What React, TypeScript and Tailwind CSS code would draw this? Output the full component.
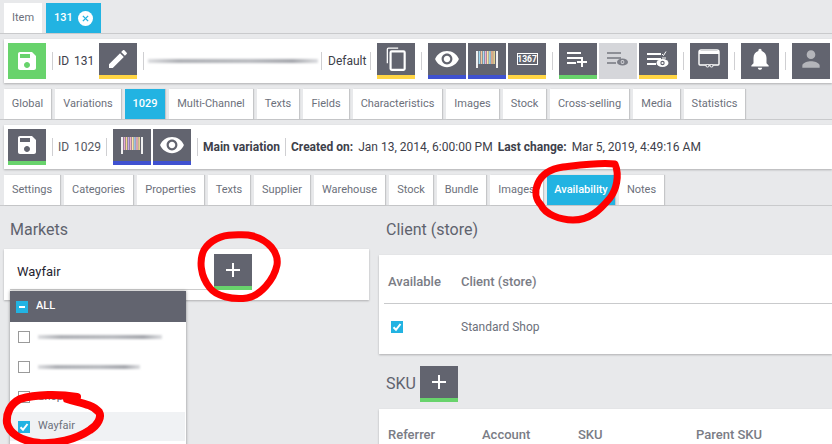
import React from 'react';

const MAIN_TABS = [
  { label: 'Global', w: 'w-[47px]' },
  { label: 'Variations', w: 'w-[66px]' },
  { label: '1029', w: 'w-[40px]', active: true },
  { label: 'Multi-Channel', w: 'w-[84px]' },
  { label: 'Texts', w: 'w-[42px]' },
  { label: 'Fields', w: 'w-[46px]' },
  { label: 'Characteristics', w: 'w-[89px]' },
  { label: 'Images', w: 'w-[53px]' },
  { label: 'Stock', w: 'w-[43px]' },
  { label: 'Cross-selling', w: 'w-[79px]' },
  { label: 'Media', w: 'w-[47px]' },
  { label: 'Statistics', w: 'w-[61px]' },
];

const SUB_TABS = [
  { label: 'Settings', w: 'w-[56px]' },
  { label: 'Categories', w: 'w-[69px]' },
  { label: 'Properties', w: 'w-[67px]' },
  { label: 'Texts', w: 'w-[42px]' },
  { label: 'Supplier', w: 'w-[56px]' },
  { label: 'Warehouse', w: 'w-[71px]' },
  { label: 'Stock', w: 'w-[44px]' },
  { label: 'Bundle', w: 'w-[49px]' },
  { label: 'Images', w: 'w-[53px]' },
  { label: 'Availability', w: 'w-[68px]', active: true },
  { label: 'Notes', w: 'w-[45px]' },
];

const Tab = ({ label, w, active }: { label: string; w: string; active?: boolean }) => (
  <div
    className={`${w} h-[30px] pt-px flex items-center justify-center text-[11px] shadow-[1px_0_1px_rgba(0,0,0,0.15)] ${
      active ? 'bg-[#22b3e2] text-white font-medium' : 'bg-white text-[#6c707b]'
    }`}
  >
    {label}
  </div>
);

const Sep = () => <div className="w-px h-[18px] mx-[6px] bg-[#cfcfd2] shrink-0" />;

const Btn = ({
  bar,
  light,
  children,
}: {
  bar?: string;
  light?: boolean;
  children: React.ReactNode;
}) => (
  <div
    className={`w-[38px] h-9 shrink-0 flex items-center justify-center border-b-4 ${
      light ? 'bg-[#d5d6da]' : 'bg-[#62646f]'
    } ${bar ?? (light ? 'border-[#d5d6da]' : 'border-[#62646f]')}`}
  >
    {children}
  </div>
);

const SaveIcon = () => (
  <svg width="24" height="24" viewBox="0 0 24 24" fill="white">
    <path d="M17 3H5c-1.11 0-2 .9-2 2v14c0 1.1.89 2 2 2h14c1.1 0 2-.9 2-2V7l-4-4zm-5 16c-1.66 0-3-1.34-3-3s1.34-3 3-3 3 1.34 3 3-1.34 3-3 3zm3-10H5V5h10v4z" />
  </svg>
);

const EyeIcon = ({ fill = 'white', size = 26 }: { fill?: string; size?: number }) => (
  <svg width={size} height={size} viewBox="0 0 24 24" fill={fill}>
    <path d="M12 4.5C7 4.5 2.73 7.61 1 12c1.73 4.39 6 7.5 11 7.5s9.27-3.11 11-7.5c-1.73-4.39-6-7.5-11-7.5zM12 17c-2.76 0-5-2.24-5-5s2.24-5 5-5 5 2.24 5 5-2.24 5-5 5zm0-8c-1.66 0-3 1.34-3 3s1.34 3 3 3 3-1.34 3-3-1.34-3-3-3z" />
  </svg>
);

const BarcodeIcon = ({ colors }: { colors: string[] }) => (
  <svg width="22" height="17" viewBox="0 0 22 17">
    <rect x="0" y="0" width="2" height="17" fill="#f0f0f0" />
    {colors.map((c, i) => (
      <rect key={i} x={2.6 + i * 2.1} y="0" width="1.6" height="13" fill={c} />
    ))}
    <rect x="20" y="0" width="2" height="17" fill="#f0f0f0" />
  </svg>
);

const ListLines = ({ fill }: { fill: string }) => (
  <>
    <rect x="0" y="1" width="14" height="2" fill={fill} />
    <rect x="0" y="6" width="14" height="2" fill={fill} />
    <rect x="0" y="11" width="9" height="2" fill={fill} />
  </>
);

const Card = ({ className, children }: { className?: string; children: React.ReactNode }) => (
  <div className={`bg-white shadow-[0_1px_2px_rgba(0,0,0,0.25)] ${className ?? ''}`}>{children}</div>
);

const Blurred = ({ className }: { className: string }) => (
  <div
    className={`${className} h-[4px] blur-[1px] bg-[linear-gradient(90deg,#dcdde0,#aeb0b5_18%,#b8babf_60%,#a4a6ac_85%,#dcdde0)]`}
  />
);

const Check = ({ on }: { on?: boolean }) =>
  on ? (
    <div className="w-3 h-3 bg-[#22b3e2] flex items-center justify-center shrink-0">
      <svg width="10" height="10" viewBox="0 0 10 10" fill="none" stroke="white" strokeWidth="2">
        <path d="M1.5 5.2 4 7.8 8.5 2" />
      </svg>
    </div>
  ) : (
    <div className="w-3 h-3 border border-[#9a9a9a] bg-white shrink-0" />
  );

const PlusIcon = () => (
  <svg width="16" height="16" viewBox="0 0 16 16" stroke="white" strokeWidth="2">
    <path d="M8 1v14M1 8h14" />
  </svg>
);

const BAR_A = ['#9fd8f0', '#f4c9a0', '#a8dcf2', '#f0b0d0', '#f6e6a8', '#9fd8f0', '#f4b890', '#f0dc98'];
const BAR_B = ['#e8a8d8', '#f4d890', '#c8a8e8', '#f0b0c8', '#f6e6a8', '#a8c8f0', '#f4b0c0', '#f0dc98'];

export default function App() {
  return (
    <div
      className="relative w-[832px] h-[444px] overflow-hidden bg-[#e8e9eb] text-[11px]"
      style={{ fontFamily: 'Roboto, sans-serif' }}
    >
      {/* top tabs */}
      <div className="flex gap-1 pl-1 pt-[3px] border-b border-[#c9cacc]">
        <div className="w-[38px] h-[30px] pt-px bg-white text-[#6c707b] flex items-center justify-center">Item</div>
        <div className="w-[55px] h-[30px] bg-[#22b3e2] text-white font-medium flex items-center gap-[5px] pl-2">
          131
          <span className="w-[15px] h-[15px] rounded-full bg-white flex items-center justify-center">
            <svg width="7" height="7" viewBox="0 0 8 8" stroke="#22b3e2" strokeWidth="1.6">
              <path d="M1 1l6 6M7 1 1 7" />
            </svg>
          </span>
        </div>
      </div>

      {/* item toolbar */}
      <Card className="ml-1 mt-[5px] h-11 pl-1 flex items-center text-[12px] text-[#3d404a]">
        <div className="w-[38px] h-9 shrink-0 flex items-center justify-center bg-[#68d36c]">
          <SaveIcon />
        </div>
        <Sep />
        <span className="w-[34px] -ml-px mr-[7px] [word-spacing:2px] whitespace-nowrap">ID 131</span>
        <Btn bar="border-[#ffd544]">
          <svg width="24" height="24" viewBox="0 0 24 24" fill="white">
            <path d="M3 17.25V21h3.75L17.81 9.94l-3.75-3.75L3 17.25zM20.71 7.04c.39-.39.39-1.02 0-1.41l-2.34-2.34c-.39-.39-1.02-.39-1.41 0l-1.83 1.83 3.75 3.75 1.83-1.83z" />
          </svg>
        </Btn>
        <Sep />
        <Blurred className="w-[170px] -ml-[2px] -mr-[3px] shrink-0" />
        <Sep />
        <span className="w-[36px] whitespace-nowrap">Default</span>
        <Sep />
        <Btn bar="border-[#ffd544]">
          <svg width="26" height="26" viewBox="0 0 24 24" fill="none" stroke="white" strokeWidth="2">
            <path d="M14 2H5a1 1 0 0 0-1 1v13" strokeWidth="1.2" />
            <rect x="7" y="5" width="13" height="17" rx="1" />
          </svg>
        </Btn>
        <Sep />
        <div className="flex gap-[2px]">
          <Btn bar="border-[#3f51d0]">
            <EyeIcon />
          </Btn>
          <Btn bar="border-[#3f51d0]">
            <BarcodeIcon colors={BAR_A} />
          </Btn>
          <Btn bar="border-[#ffd544]">
            <div className="w-[21px] h-[12px] border border-white flex items-center justify-center text-white text-[8.5px] font-bold leading-none">
              1367
            </div>
          </Btn>
        </div>
        <Sep />
        <div className="flex gap-[2px]">
          <Btn bar="border-[#68d36c]">
            <svg width="22" height="16" viewBox="0 0 22 16">
              <ListLines fill="white" />
              <path d="M15 6v10M10 11h10" stroke="white" strokeWidth="2" />
            </svg>
          </Btn>
          <Btn light>
            <svg width="22" height="16" viewBox="0 0 22 16">
              <ListLines fill="#8d8f96" />
              <ellipse cx="15.5" cy="11" rx="5.5" ry="3.6" fill="#7c7e87" />
              <circle cx="15.5" cy="11" r="1.9" fill="#d5d6da" />
              <circle cx="15.5" cy="11" r="1" fill="#7c7e87" />
            </svg>
          </Btn>
          <Btn bar="border-[#ffd544]">
            <svg width="22" height="18" viewBox="0 0 22 18">
              <g transform="translate(0 2)">
                <ListLines fill="white" />
              </g>
              <path d="M15 4l1.5 1.5L19 1.5M15 8h4" fill="none" stroke="white" strokeWidth="1" />
              <ellipse cx="15.5" cy="13" rx="6" ry="4" fill="white" />
              <circle cx="15.5" cy="13" r="2.2" fill="#62646f" />
              <circle cx="15.5" cy="13" r="1.1" fill="white" />
            </svg>
          </Btn>
        </div>
        <Sep />
        <Btn>
          <svg width="22" height="20" viewBox="0 0 22 20" fill="none" stroke="white">
            <path d="M1 3a2 2 0 0 1 2-2h16a2 2 0 0 1 2 2v12a1 1 0 0 1-1 1H2a1 1 0 0 1-1-1z" strokeWidth="1.4" />
            <path d="M1 3.5h20" strokeWidth="3" />
            <rect x="8" y="15.5" width="3" height="2.5" rx="1.2" fill="#62646f" strokeWidth="1" />
            <rect x="12" y="15.5" width="3" height="2.5" rx="1.2" fill="#62646f" strokeWidth="1" />
          </svg>
        </Btn>
        <Sep />
        <Btn>
          <svg width="26" height="26" viewBox="0 0 24 24" fill="white">
            <path d="M12 22c1.1 0 2-.9 2-2h-4c0 1.1.9 2 2 2zm6-6v-5c0-3.07-1.63-5.64-4.5-6.32V4c0-.83-.67-1.5-1.5-1.5s-1.5.67-1.5 1.5v.68C7.64 5.36 6 7.92 6 11v5l-2 2v1h16v-1l-2-2z" />
          </svg>
        </Btn>
        <Sep />
        <Btn>
          <svg width="26" height="26" viewBox="0 0 24 24" fill="#b4b5ba">
            <path d="M12 12c2.21 0 4-1.79 4-4s-1.79-4-4-4-4 1.79-4 4 1.79 4 4 4zm0 2c-2.67 0-8 1.34-8 4v2h16v-2c0-2.66-5.33-4-8-4z" />
          </svg>
        </Btn>
      </Card>

      {/* item tabs */}
      <div className="flex gap-1 pl-1 mt-[6px] border-b border-[#c9cacc]">
        {MAIN_TABS.map((t) => (
          <Tab key={t.label} {...t} />
        ))}
      </div>

      {/* variation toolbar */}
      <Card className="ml-1 mt-[5px] h-11 pl-1 flex items-center text-[#3d404a] text-[12px]">
        <Btn bar="border-[#68d36c]">
          <SaveIcon />
        </Btn>
        <Sep />
        <span className="text-[#555862] w-[41px] -ml-px mr-px [word-spacing:2px] whitespace-nowrap">ID 1029</span>
        <Sep />
        <div className="flex gap-[2px]">
          <Btn bar="border-[#3f51d0]">
            <BarcodeIcon colors={BAR_B} />
          </Btn>
          <Btn bar="border-[#3f51d0]">
            <EyeIcon />
          </Btn>
        </div>
        <Sep />
        <span className="font-bold w-[77px] -ml-px -mr-px whitespace-nowrap">Main variation</span>
        <Sep />
        <span className="font-bold -ml-px mr-[5px]">Created on:</span>
        <span className="mr-[5px]">Jan 13, 2014, 6:00:00 PM</span>
        <span className="font-bold mr-[5px]">Last change:</span>
        <span>Mar 5, 2019, 4:49:16 AM</span>
      </Card>

      {/* variation tabs */}
      <div className="flex gap-1 pl-1 mt-[6px] border-b border-[#c9cacc]">
        {SUB_TABS.map((t) => (
          <Tab key={t.label} {...t} />
        ))}
      </div>

      {/* content */}
      <div className="flex pl-1 gap-[10px]">
        <div className="w-[365px] shrink-0">
          <h2 className="pt-[14px] pl-[6px] mb-[9px] text-[16px] leading-5 text-[#5f636e]">Markets</h2>
          <Card className="relative h-[51px] pl-[6px] pt-[5px] flex items-start">
            <div className="w-[204px] h-[36px] border-b border-[#cccccc] pl-[7px] pt-px flex items-center text-[13px] text-[#1f2430]">
              Wayfair
            </div>
            <Btn bar="border-[#68d36c]">
              <PlusIcon />
            </Btn>
            {/* market dropdown */}
            <div className="absolute left-[6px] top-[42px] w-[176px] bg-white shadow-[0_0_3px_rgba(0,0,0,0.4)] z-10">
              <div className="h-[31px] bg-[#62646f] pl-[6px] flex items-center gap-2 text-white font-medium">
                <div className="w-3 h-3 bg-[#22b3e2] flex items-center justify-center">
                  <div className="w-[6px] h-[2px] bg-white" />
                </div>
                ALL
              </div>
              <div className="h-[30px] pl-2 flex items-center gap-2">
                <Check />
                <Blurred className="w-[124px]" />
              </div>
              <div className="h-[30px] pl-2 flex items-center gap-2">
                <Check />
                <Blurred className="w-[102px]" />
              </div>
              <div className="h-[30px] pl-2 flex items-center gap-2 text-[#6c707b]">
                <Check />
                Shop
              </div>
              <div className="h-[29px] pl-2 mr-px flex items-center gap-2 bg-[#f0f2f4] text-[#6c707b]">
                <Check on />
                Wayfair
              </div>
              <div className="h-[30px]" />
            </div>
          </Card>
        </div>

        <div className="flex-1">
          <h2 className="pt-[14px] pl-[7px] mb-[15px] text-[16px] leading-5 text-[#5f636e]">Client (store)</h2>
          <Card className="h-[99px] pl-[5px]">
            <div className="grid grid-cols-[73px_1fr] h-[49px] items-center pl-1 pt-[5px] border-b border-[#c9cacc] text-[13px] font-medium text-[#7a7c85]">
              <span>Available</span>
              <span>Client (store)</span>
            </div>
            <div className="grid grid-cols-[77px_1fr] h-[46px] items-center text-[12px] text-[#6c707b]">
              <div className="pl-[7px]">
                <Check on />
              </div>
              <span>Standard Shop</span>
            </div>
          </Card>
          <div className="mt-3 flex items-start gap-[5px] pl-[7px]">
            <span className="text-[16px] leading-9 text-[#5f636e] w-[29px]">SKU</span>
            <Btn bar="border-[#68d36c]">
              <PlusIcon />
            </Btn>
          </div>
          <Card className="mt-[7px] h-[60px] pl-[9px] pt-[18px] flex text-[13px] font-medium leading-4 text-[#7a7c85]">
            <span className="w-[94px]">Referrer</span>
            <span className="w-[96px]">Account</span>
            <span className="w-[118px]">SKU</span>
            <span>Parent SKU</span>
          </Card>
        </div>
      </div>

      {/* red hand-drawn annotations */}
      <svg
        className="absolute inset-0 z-20 pointer-events-none"
        width="832"
        height="444"
        fill="none"
        stroke="#ff0000"
        strokeWidth="7"
        strokeLinecap="round"
        strokeLinejoin="round"
      >
        <path d="M615 164C600 162 580 165 563 167C550 169 542 174 538 183C534 192 536 200 541 205C545 214 560 220 573 220C590 220 600 210 610 198C616 190 620 176 615 164Z" />
        <path d="M233 235C222 235 210 240 204 250C199 260 200 276 210 288C216 296 232 300 247 298C260 296 274 280 277 265C279 252 268 240 253 236C246 234 240 235 233 235Z" />
        <path
          strokeWidth="8"
          d="M77 397C60 394 36 394 20 399C10 404 6 414 7 423C9 433 20 441 40 443C55 444 75 440 90 430C98 425 102 417 99 412C92 404 80 403 67 399"
        />
      </svg>
    </div>
  );
}
